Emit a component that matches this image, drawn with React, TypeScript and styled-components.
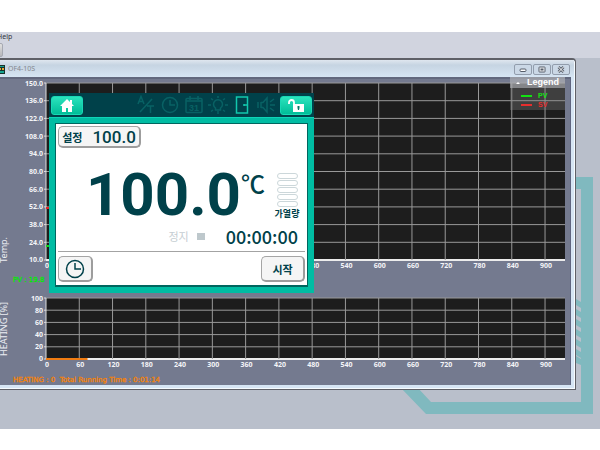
import React from "react";
import styled, { createGlobalStyle } from "styled-components";

const Global = createGlobalStyle`
  * { box-sizing: border-box; }
  body { margin: 0; background: #fff; font-family: "Noto Sans", "Noto Sans CJK KR", sans-serif; }
  button { font: inherit; padding: 0; margin: 0; }
`;

const Page = styled.main`
  padding: 32px 0 20px;
  overflow: hidden;
`;

const Desktop = styled.div`
  position: relative;
  background: #b9bfcb;
  padding-bottom: 39px;
  overflow: hidden;
`;

const MenuBar = styled.nav`
  height: 26px;
  background: #d1d4df;
  overflow: hidden;
`;

const MenuItem = styled.button`
  display: block;
  height: 10px;
  margin-left: -3px;
  border: 0;
  background: none;
  color: #33363d;
  font-size: 7px;
  line-height: 10px;
`;

const ToolButton = styled.button`
  display: block;
  width: 7px;
  height: 14px;
  margin: 1px 0 0 -4px;
  border: 1px solid #a6a9b2;
  border-radius: 2px;
  background: linear-gradient(#e0e0e0, #b7b7bb);
`;

const Backdrop = styled.svg`
  position: absolute;
  right: 0;
  bottom: 0;
  width: 200px;
  height: 260px;
`;

const Window = styled.section`
  position: relative;
  margin-right: 24px;
  border: solid #5f6067;
  border-width: 2px 1px 1px 0;
  border-radius: 0 4px 0 0;
  background: #d6e5f4;
  padding: 0 4px 4px 0;
  box-shadow: inset -1px -1px #f6fbff, inset 0 1px #eef4fa;
`;

const TitleBar = styled.header`
  display: flex;
  align-items: center;
  height: 17px;
  background: linear-gradient(#dfe6ef, #c6d4e2 30%, #d6e5f3);
  margin-right: -3px;
  padding: 1px 4px 0 0;
`;

const AppIcon = styled.svg`
  width: 5px;
  height: 9px;
  flex: none;
`;

const Title = styled.h1`
  flex: 1;
  margin: 0 0 0 3px;
  color: #83878e;
  font-size: 7px;
  line-height: 10px;
  font-weight: 400;
`;

const CaptionButton = styled.button`
  display: grid;
  place-items: center;
  width: 18px;
  height: 11px;
  margin-left: 1px;
  border: 1px solid #929dac;
  border-radius: 2px;
  background: #cbd8e6;
  svg { width: 8px; height: 7px; }
`;

const Client = styled.div`
  background: #747a8f;
  border-top: 2px solid #62687e;
  border-right: 1px solid #5f6580;
  padding: 4px 5px 0 0;
`;

const ChartRow = styled.div<{ $gap: number }>`
  display: grid;
  grid-template-columns: 46px minmax(0, 1fr);
  margin-bottom: ${(p) => p.$gap}px;
`;

const Scale = styled.div<{ $height: number }>`
  position: relative;
  height: ${(p) => p.$height}px;
  display: flex;
  flex-direction: column;
  justify-content: space-between;
  padding-right: 3px;
`;

const Tick = styled.span`
  display: flex;
  align-items: center;
  justify-content: flex-end;
  height: 0;
  color: #f4f5f8;
  font: 700 7px/9px "Open Sans", sans-serif;
`;

const AxisName = styled.span<{ $bottom: number }>`
  position: absolute;
  left: -1px;
  bottom: ${(p) => p.$bottom}px;
  writing-mode: vertical-rl;
  transform: rotate(180deg);
  white-space: nowrap;
  color: #eceef3;
  font-size: 9px;
  line-height: 10px;
`;

const Plot = styled.div<{ $height: number }>`
  position: relative;
  height: ${(p) => p.$height}px;
  background: #1d1d1d;
`;

const Grid = styled.svg`
  display: block;
  width: 100%;
  height: 100%;
  overflow: visible;
`;

const Hours = styled.div`
  grid-column: 2;
  display: grid;
  grid-template-columns: repeat(15, 60fr) 36fr;
  padding-top: 1px;
`;

const Hour = styled.span`
  display: flex;
  justify-content: center;
  width: 2px;
  color: #f4f5f8;
  font: 700 7px/9px "Open Sans", sans-serif;
`;

const Legend = styled.div`
  position: absolute;
  right: 0;
  top: -6px;
  width: 55px;
  height: 33px;
  background: rgba(135, 135, 135, 0.33);
`;

const LegendTitle = styled.div`
  display: flex;
  height: 11px;
  align-items: center;
  padding-left: 6px;
  gap: 7px;
  margin-bottom: 3px;
  background: rgba(180, 181, 186, 0.6);
  color: #fff;
  font: 700 9px/11px "Liberation Sans", sans-serif;
`;

const LegendItem = styled.div<{ $color: string }>`
  display: flex;
  align-items: center;
  gap: 6px;
  height: 9px;
  padding-left: 11px;
  color: ${(p) => p.$color};
  font: 700 7px/9px "Liberation Sans", sans-serif;
  &::before { content: ""; width: 11px; height: 2px; background: ${(p) => p.$color}; }
`;

const Reading = styled.div<{ $color: string; $gap: number }>`
  height: 10px;
  margin-bottom: ${(p) => p.$gap}px;
  padding-left: 13px;
  white-space: pre;
  color: ${(p) => p.$color};
  font: 400 7px/10px "DejaVu Sans", sans-serif;
  -webkit-text-stroke: 0.3px;
`;

const Device = styled.section`
  position: absolute;
  left: 49px;
  top: 33px;
  width: 265px;
  background: #00bca3;
  padding-bottom: 6px;
  color: #00414a;
`;

const DeviceBar = styled.header`
  display: flex;
  align-items: center;
  height: 24px;
  padding: 0 2px;
  background: #00414a;
  box-shadow: 0 1px #10d3b7;
`;

const Status = styled.div`
  flex: 1;
  display: flex;
  justify-content: flex-end;
  align-items: center;
  gap: 4px;
  padding-right: 4px;
  svg { width: 20px; height: 20px; }
`;

const GreenButton = styled.button`
  display: grid;
  place-items: center;
  width: 32px;
  height: 19px;
  border: 1px solid #19d8b5;
  border-radius: 3px;
  background: linear-gradient(#2be3bd, #00bd98);
  svg { width: 18px; height: 15px; }
`;

const Screen = styled.div`
  margin: 6px 6px 0;
  padding: 2px 2px 3px;
  border: 1px solid #00665f;
  border-bottom-width: 2px;
  background: #fff;
`;

const KeyButton = styled.button<{ $width: number; $height: number }>`
  display: flex;
  align-items: center;
  justify-content: center;
  gap: 10px;
  width: ${(p) => p.$width}px;
  height: ${(p) => p.$height}px;
  border: 1px solid #a5a5a5;
  border-right: 2px solid #9d9d9d;
  border-bottom: 2px solid #9d9d9d;
  border-radius: 5px;
  background: #f5f5f5;
  color: #00414a;
  font: 700 11px/16px "Noto Sans CJK KR", sans-serif;
  svg { width: 20px; height: 20px; }
`;

const SetValue = styled.span`
  font: 500 17px/18px Roboto, sans-serif;
`;

const Measure = styled.div`
  display: flex;
  justify-content: flex-end;
  height: 72px;
  padding: 25px 5px 0 0;
`;

const Temperature = styled.output`
  font: 700 60px/44px Roboto, sans-serif;
`;

const Unit = styled.span`
  width: 27px;
  font: 500 24px/20px "Noto Sans CJK KR", sans-serif;
`;

const Heat = styled.div`
  display: flex;
  flex-direction: column;
  align-items: center;
  width: 26px;
  margin-left: 6px;
`;

const HeatCell = styled.span`
  width: 21px;
  height: 6px;
  margin-bottom: 1px;
  border: 1px solid #ccd7da;
  border-radius: 3px;
`;

const HeatLabel = styled.span`
  white-space: nowrap;
  font: 700 9px/12px "Noto Sans CJK KR", sans-serif;
`;

const RunLine = styled.div`
  display: flex;
  align-items: center;
  justify-content: flex-end;
  height: 31px;
  padding: 1px 7px 0 0;
`;

const RunState = styled.span`
  display: flex;
  align-items: center;
  gap: 8px;
  margin-right: 21px;
  color: #c5cdd2;
  font: 400 11px/16px "Noto Sans CJK KR", sans-serif;
  &::after { content: ""; width: 8px; height: 7px; background: #bec8cc; }
`;

const Timer = styled.time`
  font: 500 18px/20px "Noto Sans CJK KR", sans-serif;
`;

const Footer = styled.footer`
  display: flex;
  justify-content: space-between;
  padding-top: 4px;
  border-top: 1px solid #a3a3a3;
`;

type GridProps = { rows: number; label: string; children?: React.ReactNode };

function ChartGrid({ rows, label, children }: GridProps) {
  return (
    <Grid role="img" aria-label={label}>
      {Array.from({ length: rows + 1 }, (_, i) => {
        const y = `${(i * 100) / rows}%`;
        return (
          <g key={i}>
            <line x1="0" x2="100%" y1={y} y2={y} stroke={i === rows ? "#ececec" : "#999"} strokeWidth={i === rows ? 2 : 1} />
            <line x1="-2" x2="0" y1={y} y2={y} stroke="#ddd" />
          </g>
        );
      })}
      {Array.from({ length: 16 }, (_, i) => {
        const x = `${(i * 6000) / 936}%`;
        return <line key={i} x1={x} x2={x} y1="0" y2="100%" stroke={i ? "#999" : "#e0e0e0"} />;
      })}
      {children}
    </Grid>
  );
}

function HourLabels() {
  return (
    <Hours>
      {Array.from({ length: 16 }, (_, i) => (
        <Hour key={i}>{i * 60}</Hour>
      ))}
    </Hours>
  );
}

const temps = Array.from({ length: 11 }, (_, i) => (150 - i * 14).toFixed(1));
const heats = [100, 80, 60, 40, 20, 0];
const dim = "#086164";

function StatusIcons() {
  return (
    <Status>
      <svg viewBox="0 0 20 20" fill="none" stroke={dim} strokeWidth="1.5">
        <path d="M2 9 5 1.500 8 9M3 6.500h4M4 17 16 4M11 11h7M14.500 11v7" />
      </svg>
      <svg viewBox="0 0 20 20" fill="none" stroke={dim} strokeWidth="1.5">
        <circle cx="10" cy="10" r="7.5" />
        <path d="M10 5v5h5" />
      </svg>
      <svg viewBox="0 0 20 20" fill="none" stroke={dim} strokeWidth="1.5">
        <rect x="2" y="3.5" width="16" height="14" rx="1" />
        <path d="M2 6h16M6 1v4M14 1v4" />
        <text x="10" y="15.500" fill={dim} stroke="none" textAnchor="middle" fontFamily="Liberation Sans" fontWeight="700" fontSize="9">31</text>
      </svg>
      <svg viewBox="0 0 20 20" fill="none" stroke={dim} strokeWidth="1.5">
        <path d="M7.500 15v-2a4.500 4.500 0 1 1 5 0v2zM10 1v2M0 10h3M17 10h3M3 3.500l2 1.500M17 3.500 15 5M3 16.500l2-1.500M17 16.500 15 15M10 16v3" />
      </svg>
      <svg viewBox="0 0 20 20" fill="none" stroke="#12c7ad" strokeWidth="1.5">
        <rect x="4.500" y="2" width="11" height="16" />
        <path d="M15 10h-3" />
        <circle cx="12" cy="10" r="1" fill="#12c7ad" stroke="none" />
      </svg>
      <svg viewBox="0 0 20 20" fill="none" stroke={dim} strokeWidth="1.5">
        <path d="M2 7v6M5 7v6M5 7.500h2L11 3v14l-4-4.500H5M14 7l4-3M14 10h5M14 13l4 3" />
      </svg>
    </Status>
  );
}

export default function App() {
  return (
    <>
      <Global />
      <Page>
        <Desktop>
          <Backdrop viewBox="0 0 200 260" aria-hidden="true">
            <path fill="#80b9bf" d="M170 8h23v237H26L0 218h17l14 15h150V20h-11z" />
            {[0, 1, 2, 3, 4, 5].map((i) => (
              <path key={i} fill="#80b9bf" d={`M176 ${130 + i * 10}l5 3v6l-5-3z`} />
            ))}
            <path fill="#80b9bf" d="M176 187l5 3v6l-5-2z" />
          </Backdrop>
          <MenuBar>
            <MenuItem>Help</MenuItem>
            <ToolButton aria-label="Tool" />
          </MenuBar>
          <Window>
            <TitleBar>
              <AppIcon viewBox="0 0 5 9">
                <path fill="#17332c" d="M0 0h5v9H0z" />
                <path fill="#16a391" d="M0 1h4v1H0zM0 6h4v2H0z" />
                <path fill="#e4a533" d="M0 3h1v2H0zM2 3h2v2H2z" />
              </AppIcon>
              <Title>OF4-10S</Title>
              <CaptionButton aria-label="Minimize">
                <svg viewBox="0 0 8 7"><rect x="1" y="3" width="6" height="2.500" rx="1" fill="#fff" stroke="#555d69" /></svg>
              </CaptionButton>
              <CaptionButton aria-label="Maximize">
                <svg viewBox="0 0 8 7" fill="#f4f6f9" stroke="#555d69"><rect x="1" y="1" width="6" height="5" rx=".5" /><rect x="3" y="3" width="2" height="1" /></svg>
              </CaptionButton>
              <CaptionButton aria-label="Close">
                <svg viewBox="0 0 8 7" stroke="#555d69"><path d="m1.500 1 5 5M6.500 1l-5 5" strokeWidth="2.600" /><path d="m1.500 1 5 5M6.500 1l-5 5" stroke="#fff" strokeWidth="1" /></svg>
              </CaptionButton>
            </TitleBar>
            <Client>
              <ChartRow $gap={5}>
                <Scale $height={177}>
                  {temps.map((t) => <Tick key={t}>{t}</Tick>)}
                  <AxisName $bottom={-3}>Temp.</AxisName>
                </Scale>
                <Plot $height={177}>
                  <ChartGrid rows={10} label="Temperature">
                    <path d="M0 125h4" stroke="#e22727" strokeWidth="2" />
                    <path d="M0 163h4" stroke="#19d219" strokeWidth="2" />
                  </ChartGrid>
                  <Legend>
                    <LegendTitle>
                      <svg width="4" height="3" viewBox="0 0 4 3"><path fill="#fff" d="m0 3 2-2 2 2z" /></svg>
                      Legend
                    </LegendTitle>
                    <LegendItem $color="#12e312">PV</LegendItem>
                    <LegendItem $color="#e62e2e">SV</LegendItem>
                  </Legend>
                </Plot>
                <HourLabels />
              </ChartRow>
              <Reading $color="#00ea00" $gap={13}>PV : 19.8</Reading>
              <ChartRow $gap={6}>
                <Scale $height={61}>
                  {heats.map((t) => <Tick key={t}>{t}</Tick>)}
                  <AxisName $bottom={3}>HEATING [%]</AxisName>
                </Scale>
                <Plot $height={61}>
                  <ChartGrid rows={5} label="Heating">
                    <line x1="0" x2="8%" y1="100%" y2="100%" stroke="#f07c12" strokeWidth="2" />
                  </ChartGrid>
                </Plot>
                <HourLabels />
              </ChartRow>
              <Reading $color="#f58207" $gap={0}>{"HEATING : 0  Total Running Time : 0:01:14"}</Reading>
            </Client>
            <Device>
              <DeviceBar>
                <GreenButton aria-label="Home">
                  <svg viewBox="0 0 18 15" fill="#fff"><path d="M9 1 2 8h2v6h4v-4h2v4h4V8h2l-2-2V2h-2v2z" /></svg>
                </GreenButton>
                <StatusIcons />
                <GreenButton aria-label="Unlock">
                  <svg viewBox="0 0 18 15">
                    <path d="M2 6V4.500a2.500 2.500 0 0 1 5 0V7" fill="none" stroke="#fff" strokeWidth="1.800" />
                    <path d="M6 6h11v8H6z" fill="#fff" />
                    <path d="M10.500 8h2v2l-.5 2h-1l-.5-2z" fill="#087869" />
                  </svg>
                </GreenButton>
              </DeviceBar>
              <Screen>
                <KeyButton $width={83} $height={22}>설정 <SetValue>100.0</SetValue></KeyButton>
                <Measure>
                  <Temperature>100.0</Temperature>
                  <Unit>℃</Unit>
                  <Heat>
                    {[0, 1, 2, 3, 4].map((i) => <HeatCell key={i} />)}
                    <HeatLabel>가열량</HeatLabel>
                  </Heat>
                </Measure>
                <RunLine>
                  <RunState>정지</RunState>
                  <Timer>00:00:00</Timer>
                </RunLine>
                <Footer>
                  <KeyButton $width={35} $height={26} aria-label="Timer">
                    <svg viewBox="0 0 20 20" fill="none" stroke="#00414a" strokeWidth="1.5"><circle cx="10" cy="10" r="8.500" /><path d="M10 4v6h6" /></svg>
                  </KeyButton>
                  <KeyButton $width={44} $height={26}>시작</KeyButton>
                </Footer>
              </Screen>
            </Device>
          </Window>
        </Desktop>
      </Page>
    </>
  );
}
